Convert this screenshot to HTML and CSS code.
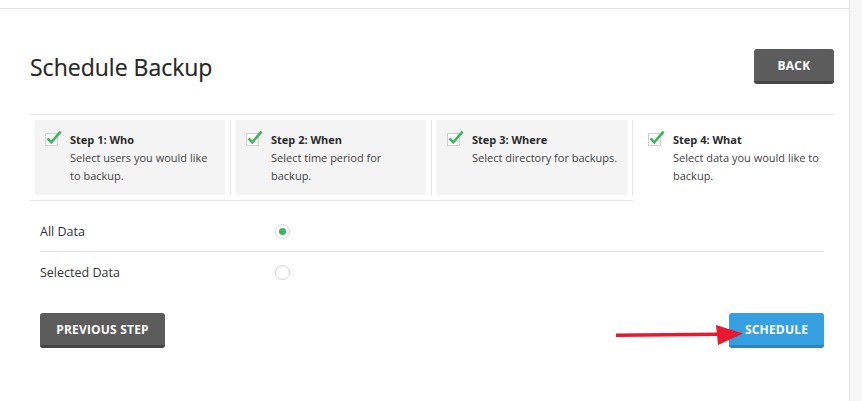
FILE: index.html
```html
<!DOCTYPE html>
<html lang="en">
<head>
<meta charset="utf-8">
<title>Schedule Backup</title>
<link rel="stylesheet" href="styles.css">
</head>
<body>
<div class="page">
  <main class="panel">
    <div class="panel-body">
      <header class="head">
        <h1 class="title">Schedule Backup</h1>
        <button class="btn btn-dark btn-back">BACK</button>
      </header>

      <div class="steps">
        <div class="step">
          <div class="step-inner">
            <div class="step-box">
              <svg class="check" width="18" height="18" viewBox="0 0 18 18"><rect x="0.5" y="4.5" width="12" height="12" fill="#fff" stroke="#cfcfcf"/><path d="M2.6 9.4 L6.2 13.3 L15.6 2.6" fill="none" stroke="#3db55c" stroke-width="2.6"/></svg>
              <div class="step-text">
                <div class="step-title">Step 1: Who</div>
                <div class="step-desc">Select users you would like to backup.</div>
              </div>
            </div>
          </div>
        </div>
        <div class="step">
          <div class="step-inner">
            <div class="step-box">
              <svg class="check" width="18" height="18" viewBox="0 0 18 18"><rect x="0.5" y="4.5" width="12" height="12" fill="#fff" stroke="#cfcfcf"/><path d="M2.6 9.4 L6.2 13.3 L15.6 2.6" fill="none" stroke="#3db55c" stroke-width="2.6"/></svg>
              <div class="step-text">
                <div class="step-title">Step 2: When</div>
                <div class="step-desc">Select time period for backup.</div>
              </div>
            </div>
          </div>
        </div>
        <div class="step">
          <div class="step-inner">
            <div class="step-box">
              <svg class="check" width="18" height="18" viewBox="0 0 18 18"><rect x="0.5" y="4.5" width="12" height="12" fill="#fff" stroke="#cfcfcf"/><path d="M2.6 9.4 L6.2 13.3 L15.6 2.6" fill="none" stroke="#3db55c" stroke-width="2.6"/></svg>
              <div class="step-text">
                <div class="step-title">Step 3: Where</div>
                <div class="step-desc">Select directory for backups.</div>
              </div>
            </div>
          </div>
        </div>
        <div class="step step-active">
          <div class="step-inner">
            <div class="step-box">
              <svg class="check" width="18" height="18" viewBox="0 0 18 18"><rect x="0.5" y="4.5" width="12" height="12" fill="#fff" stroke="#cfcfcf"/><path d="M2.6 9.4 L6.2 13.3 L15.6 2.6" fill="none" stroke="#3db55c" stroke-width="2.6"/></svg>
              <div class="step-text">
                <div class="step-title">Step 4: What</div>
                <div class="step-desc">Select data you would like to backup.</div>
              </div>
            </div>
          </div>
        </div>
      </div>

      <div class="options">
        <div class="opt opt-first">
          <span class="opt-label">All Data</span>
          <span class="radio radio-on"></span>
        </div>
        <div class="opt">
          <span class="opt-label">Selected Data</span>
          <span class="radio"></span>
        </div>
      </div>

      <div class="actions">
        <button class="btn btn-dark btn-prev">PREVIOUS STEP</button>
        <div class="sched-wrap">
          <svg class="arrow" width="128" height="24" viewBox="0 0 128 24"><path d="M1 12.2 L106 11.2" stroke="#e8192e" stroke-width="3.4" fill="none"/><polygon points="101,2 128,10.5 103,22" fill="#e8192e"/></svg>
          <button class="btn btn-blue btn-sched">SCHEDULE</button>
        </div>
      </div>
    </div>
  </main>
  <aside class="rail"></aside>
</div>
</body>
</html>
```

FILE: styles.css
```css
* { box-sizing: border-box; }
html, body { margin: 0; padding: 0; background: #fff; }
body {
  font-family: "Open Sans", "Liberation Sans", sans-serif;
  color: #333;
}
.page {
  display: flex;
  height: 401px;
  overflow: hidden;
}
.panel {
  width: 849px;
  padding-top: 8px;
}
.panel-body {
  border-top: 1px solid #e2e2e2;
  padding: 0 15px 0 30px;
}
.rail {
  flex: 1;
  background: #f6f6f6;
  border-left: 1px solid #e6e6e6;
}
.head {
  display: flex;
  justify-content: space-between;
  align-items: center;
  margin-top: 40px;
  margin-bottom: 30px;
}
.title {
  margin: 0;
  font-size: 23px;
  font-weight: 400;
  color: #262626;
  line-height: 30px;
  -webkit-text-stroke: 0.2px #262626;
}
.btn {
  font-family: "Open Sans", "Liberation Sans", sans-serif;
  height: 35px;
  border: 0;
  border-radius: 3px;
  color: #fff;
  font-size: 12px;
  font-weight: 700;
  letter-spacing: 0.2px;
  padding: 0;
  cursor: pointer;
}
.btn-dark {
  background: #5c5c5c;
  border-bottom: 3px solid #454545;
}
.btn-blue {
  background: #369fe0;
  border-bottom: 3px solid #2e84bd;
}
.btn-back { width: 80px; }
.btn-prev { width: 125px; }
.btn-sched { width: 95px; }

.steps {
  display: grid;
  grid-template-columns: repeat(4, 1fr);
  border-top: 1px solid #e8e8e8;
}
.step {
  padding: 5px 0 5px 5px;
  border-bottom: 1px solid #e8e8e8;
}
.step-inner {
  padding-right: 5px;
  border-right: 1px solid #e6e6e6;
}
.step-box {
  background: #f4f4f4;
  height: 75px;
  padding: 9px 6px 0 10px;
  display: flex;
  gap: 7px;
}
.step-active { border-bottom-color: transparent; }
.step-active .step-inner { border-right: 0; }
.step-active .step-box { background: transparent; }
.check { flex: none; }
.step-text {
  font-size: 11px;
  line-height: 18px;
  padding-top: 2px;
}
.step-title {
  font-weight: 700;
  color: #2b2b2b;
}
.step-desc { color: #444; }

.options {
  margin-top: 10px;
  padding: 0 10px;
}
.opt {
  height: 40px;
  display: flex;
  align-items: center;
  font-size: 12.5px;
  color: #333;
}
.opt-first {
  height: 41px;
  border-bottom: 1px solid #e4e4e4;
}
.opt-label { width: 235px; }
.radio {
  width: 15px;
  height: 15px;
  border-radius: 50%;
  border: 1px solid #d6d6d6;
  background: #fff;
  display: inline-flex;
  align-items: center;
  justify-content: center;
}
.radio-on::after {
  content: "";
  width: 7px;
  height: 7px;
  border-radius: 50%;
  background: #3db55c;
}

.actions {
  margin-top: 21px;
  padding: 0 10px;
  display: flex;
  justify-content: space-between;
  align-items: flex-start;
}
.sched-wrap { position: relative; }
.arrow {
  position: absolute;
  left: -114px;
  top: 10px;
  z-index: 2;
}
```
